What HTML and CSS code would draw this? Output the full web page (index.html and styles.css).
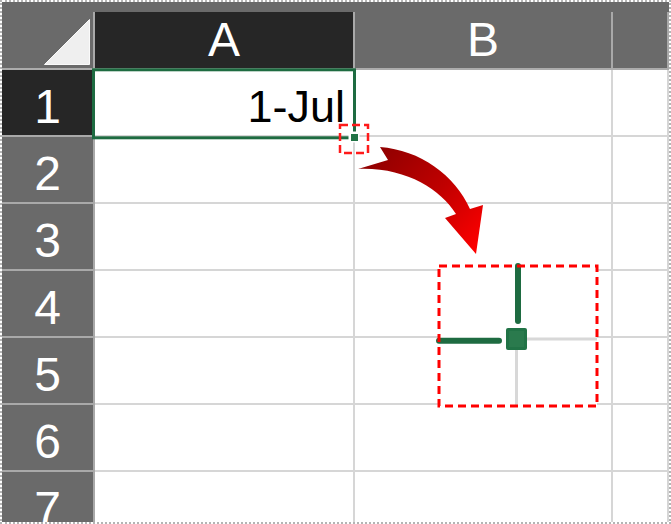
FILE: index.html
```html
<!DOCTYPE html>
<html lang="en">
<head>
  <meta charset="UTF-8">
  <title>Fill handle</title>
  <meta name="viewport" content="width=device-width, initial-scale=1.0">
  <link rel="stylesheet" href="styles.css">
</head>
<body>

  <div class="sheet">
    <div class="grid">
      <div class="col-head corner">
        <div class="lbl">
          <svg class="select-all" width="46" height="46" viewBox="0 0 46 46">
            <polygon points="45.5,0.5 45.5,45.5 0.5,45.5" fill="#efefef" stroke="#fafafa" stroke-width="1"/>
          </svg>
        </div>
      </div>
      <div class="col-head active"><div class="lbl">A</div></div>
      <div class="col-head"><div class="lbl">B</div></div>
      <div class="col-head"><div class="lbl"></div></div>

      <div class="row-head active">1</div>
      <div class="cell value">1-Jul</div>
      <div class="cell"></div>
      <div class="cell"></div>

      <div class="row-head">2</div>
      <div class="cell"></div>
      <div class="cell"></div>
      <div class="cell"></div>

      <div class="row-head">3</div>
      <div class="cell"></div>
      <div class="cell"></div>
      <div class="cell"></div>

      <div class="row-head">4</div>
      <div class="cell"></div>
      <div class="cell"></div>
      <div class="cell"></div>

      <div class="row-head">5</div>
      <div class="cell"></div>
      <div class="cell"></div>
      <div class="cell"></div>

      <div class="row-head">6</div>
      <div class="cell"></div>
      <div class="cell"></div>
      <div class="cell"></div>

      <div class="row-head">7</div>
      <div class="cell"></div>
      <div class="cell"></div>
      <div class="cell"></div>
    </div>

    <!-- selection, fill handle and the callout drawn on top of the grid -->
    <svg class="overlay" width="671" height="524" viewBox="0 0 671 524">
      <defs>
        <linearGradient id="arrowFill" gradientUnits="userSpaceOnUse" x1="365" y1="150" x2="478" y2="250">
          <stop offset="0" stop-color="#8a0000"/>
          <stop offset="0.55" stop-color="#c00000"/>
          <stop offset="1" stop-color="#ff0000"/>
        </linearGradient>
      </defs>

      <rect x="93.5" y="69.8" width="261" height="68" fill="none" stroke="#1e6b41" stroke-width="3"/>
      <rect x="348.5" y="131.5" width="11" height="11" fill="#fff"/>
      <rect x="351" y="134" width="7" height="7" fill="#217346"/>
      <rect x="340" y="125" width="28" height="28" fill="none" stroke="#ff1a1a" stroke-width="2.5" stroke-dasharray="8 4"/>

      <path d="M 380 147 C 420 150, 455 175, 470 209 L 483 205 L 476 254 L 445 218 L 456 214 C 440 189, 405 167, 358 169 L 388 160 Z" fill="url(#arrowFill)"/>

      <rect x="439" y="266" width="158" height="140" fill="#fff"/>
      <line x1="527" y1="339" x2="597" y2="339" stroke="#d8d8d8" stroke-width="3"/>
      <line x1="516.5" y1="350" x2="516.5" y2="406" stroke="#d8d8d8" stroke-width="3"/>
      <line x1="518" y1="266" x2="518" y2="321" stroke="#1e6b41" stroke-width="6" stroke-linecap="round"/>
      <line x1="439" y1="340.7" x2="499" y2="340.7" stroke="#1e6b41" stroke-width="6" stroke-linecap="round"/>
      <rect x="506" y="328" width="21" height="22" rx="2" fill="#217346"/>
      <rect x="509" y="331" width="15" height="16" fill="#2a7a4d"/>
      <rect x="439" y="266" width="158" height="140" fill="none" stroke="#ff0000" stroke-width="3" stroke-dasharray="8 5"/>
    </svg>
  </div>

</body>
</html>
```

FILE: styles.css
```css
body {
  margin: 0;
  background: #fff;
  font-family: 'Liberation Sans', Arial, sans-serif;
}

.sheet {
  position: relative;
  width: 671px;
  height: 524px;
  box-sizing: border-box;
  border: 2px dotted #b4b4b4;
  overflow: hidden;
  background: #fff;
}

.grid {
  display: grid;
  grid-template-columns: 93px 260px 258px 1fr;
  grid-template-rows: 68px;
  grid-auto-rows: 67px;
}

/* column headers */
.col-head {
  box-sizing: border-box;
  padding-top: 10px;
  background: #6a6a6a;
  border-bottom: 2px solid #acacac;
}

.col-head .lbl {
  height: 56px;
  box-sizing: border-box;
  border-right: 2px solid #a9a9a9;
  color: #fff;
  font-size: 48px;
  line-height: 56px;
  text-align: center;
}

.col-head.active .lbl {
  background: #262626;
}

.corner .lbl {
  display: flex;
  justify-content: flex-end;
  align-items: flex-end;
  padding: 0 3px 3px 0;
}

.select-all {
  display: block;
}

/* row headers */
.row-head {
  box-sizing: border-box;
  background: #6a6a6a;
  border-right: 2px solid #a9a9a9;
  border-bottom: 2px solid #a9a9a9;
  color: #fff;
  font-size: 48px;
  padding-top: 8px;
  line-height: 57px;
  text-align: center;
}

.row-head.active {
  background: #262626;
}

/* cells */
.cell {
  box-sizing: border-box;
  border-right: 2px solid #d6d6d6;
  border-bottom: 2px solid #d6d6d6;
}

.cell.value {
  color: #000;
  font-size: 45px;
  padding: 8px 8px 0 0;
  line-height: 57px;
  text-align: right;
}

.overlay {
  position: absolute;
  left: -2px;
  top: -2px;
  pointer-events: none;
}
```
